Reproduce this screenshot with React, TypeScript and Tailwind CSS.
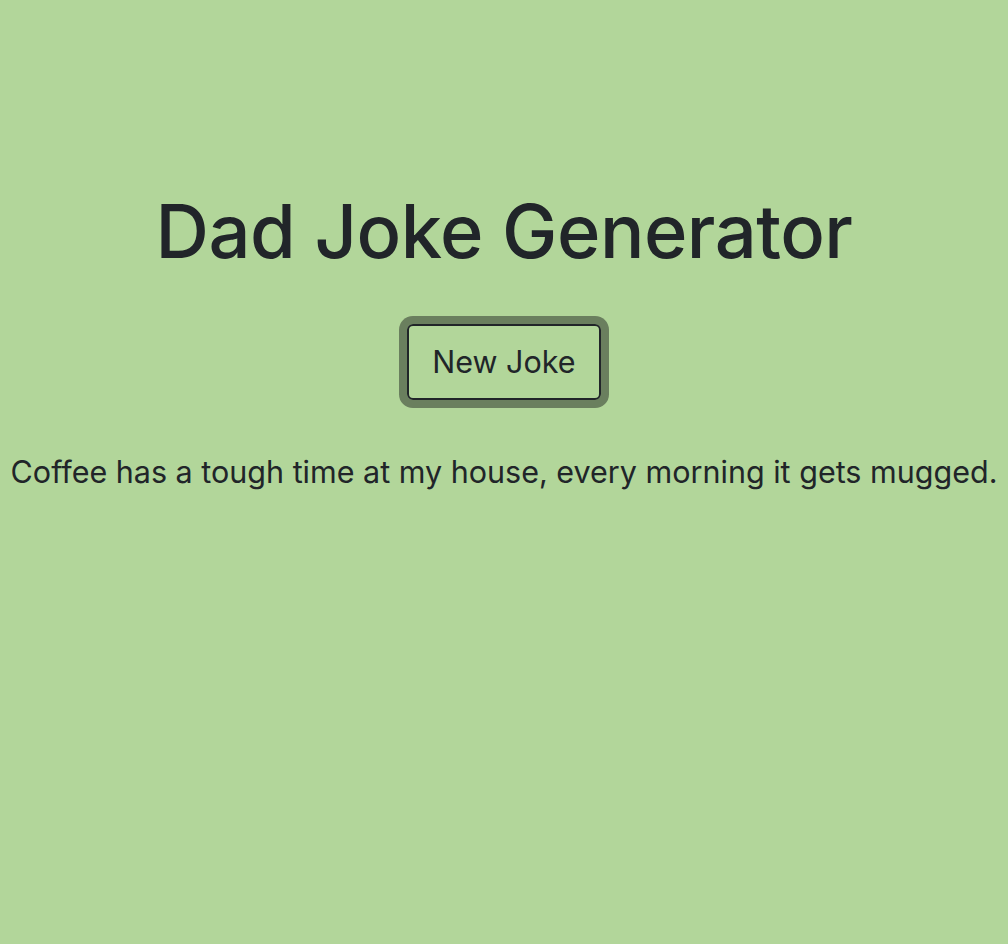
export default function App() {
  return (
    <div className="min-h-[944px] bg-[#b2d69a] text-[#212529] font-['Inter',sans-serif] flex flex-col items-center pt-[187px]">
      <h1 className="text-[74px] leading-[88px] font-medium tracking-[-0.5px]">Dad Joke Generator</h1>
      <button className="mt-[49px] h-[76px] w-[194px] rounded-[6px] border-2 border-[#212529] text-[30.5px] ring-8 ring-[#6a7f5e]">
        New Joke
      </button>
      <p className="mt-[54px] text-[30.5px] leading-[36px] whitespace-nowrap">
        Coffee has a tough time at my house, every morning it gets mugged.
      </p>
    </div>
  );
}
